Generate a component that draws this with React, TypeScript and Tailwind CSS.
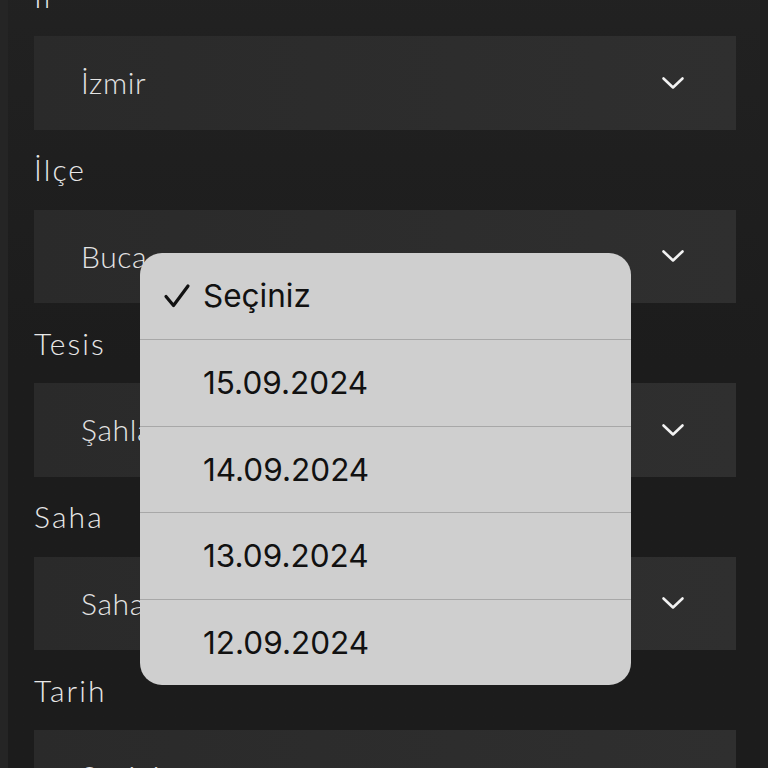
import React from 'react';

const fields = [
  { label: 'İl', value: 'İzmir' },
  { label: 'İlçe', value: 'Buca' },
  { label: 'Tesis', value: 'Şahlan Spor Tesisi' },
  { label: 'Saha', value: 'Saha 1' },
  { label: 'Tarih', value: 'Seçiniz' },
];

const options = ['Seçiniz', '15.09.2024', '14.09.2024', '13.09.2024', '12.09.2024'];

const Chevron = () => (
  <svg width="24" height="14" viewBox="0 0 24 14" fill="none" className="shrink-0">
    <path d="M2.5 2.5 12 11.5 21.5 2.5" stroke="#f2f2f2" strokeWidth="2.6" strokeLinecap="round" strokeLinejoin="round" />
  </svg>
);

const Check = () => (
  <svg width="28" height="26" viewBox="0 0 28 26" fill="none" className="shrink-0">
    <path d="M3 13.5 10.5 22.5 25 3" stroke="#111" strokeWidth="3.2" strokeLinecap="round" strokeLinejoin="round" />
  </svg>
);

export default function App() {
  return (
    <div className="relative h-[768px] w-[768px] overflow-hidden bg-[#1d1d1d] font-['Lato',sans-serif]">
      <div className="flex h-full">
        <div className="w-[8px] shrink-0 bg-[#252525]" />
        <div className="flex flex-1 flex-col pl-[26px] pr-[24px] -mt-[44px] bg-gradient-to-b from-[#222222] via-[#1c1c1c] to-[#1c1c1c]">
          {fields.map((f) => (
            <div key={f.label} className="flex flex-col">
              <div className="flex h-[80px] items-center text-[30px] font-light tracking-[0.07em] text-[#e8e8e8]">
                {f.label}
              </div>
              <div className="flex h-[93.5px] items-center justify-between bg-gradient-to-r from-[#2a2a2a] to-[#2f2f2f] pl-[47px] pr-[51px]">
                <span className="text-[30px] font-light tracking-[0.02em] text-[#e4e4e4]">{f.value}</span>
                <Chevron />
              </div>
            </div>
          ))}
        </div>
        <div className="w-[8px] shrink-0 bg-[#202020]" />
      </div>

      <div className="absolute left-[140px] top-[253px] w-[491px] overflow-hidden rounded-[22px] bg-[#cfcfcf] font-['Inter',sans-serif] text-[#111]">
        {options.map((o, i) => (
          <div
            key={o}
            className={`flex h-[86.4px] items-center ${i > 0 ? 'border-t border-[#a8a8a8]' : ''}`}
          >
            <div className="flex w-[63px] justify-end pr-[12px]">{i === 0 && <Check />}</div>
            <span className="text-[31.5px] leading-none">{o}</span>
          </div>
        ))}
      </div>
    </div>
  );
}
